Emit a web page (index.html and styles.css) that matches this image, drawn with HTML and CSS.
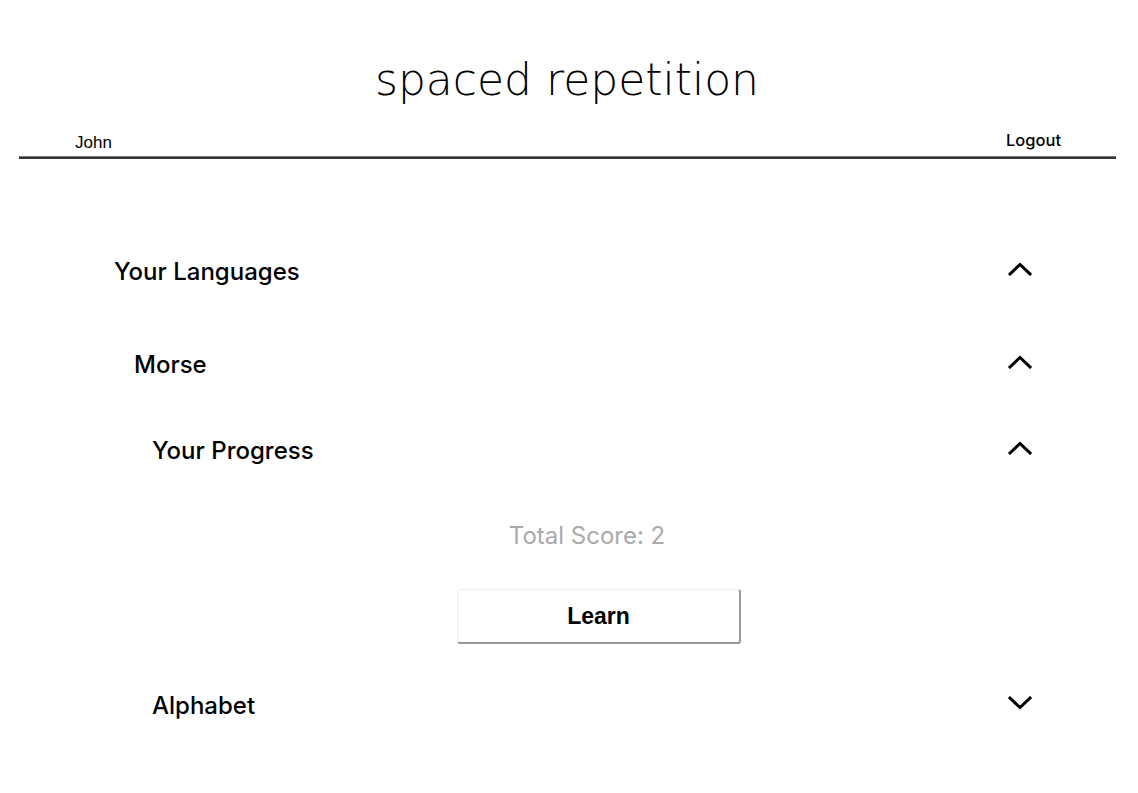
FILE: index.html
```html
<!DOCTYPE html>
<html>
<head>
<meta charset="utf-8">
<link rel="stylesheet" href="styles.css">
</head>
<body>
<header class="site-header">
  <h1 class="title">spaced repetition</h1>
  <nav class="nav">
    <span class="user">John</span>
    <a class="logout" href="#">Logout</a>
  </nav>
  <div class="rule"></div>
</header>
<main class="main">
  <section class="panel level1">
    <div class="row">
      <h2 class="heading">Your Languages</h2>
      <svg class="chev" viewBox="0 0 24 14"><path d="M2 12 L12 2.5 L22 12"/></svg>
    </div>
    <section class="panel level2">
      <div class="row">
        <h2 class="heading">Morse</h2>
        <svg class="chev" viewBox="0 0 24 14"><path d="M2 12 L12 2.5 L22 12"/></svg>
      </div>
      <section class="panel level3">
        <div class="row">
          <h2 class="heading">Your Progress</h2>
          <svg class="chev" viewBox="0 0 24 14"><path d="M2 12 L12 2.5 L22 12"/></svg>
        </div>
        <div class="progress">
          <p class="score">Total Score: 2</p>
          <button class="learn">Learn</button>
        </div>
      </section>
      <section class="panel level3 last">
        <div class="row">
          <h2 class="heading">Alphabet</h2>
          <svg class="chev" viewBox="0 0 24 14"><path d="M2 2 L12 11.5 L22 2"/></svg>
        </div>
      </section>
    </section>
  </section>
</main>
</body>
</html>
```
FILE: styles.css
```css
html, body {
  margin: 0;
  padding: 0;
  background: #fff;
  color: #000;
}
body {
  font-family: "Inter", "Liberation Sans", sans-serif;
  width: 1138px;
}
.site-header {
  padding-top: 48px;
}
.title {
  margin: 0;
  text-align: center;
  font-family: "DejaVu Sans", sans-serif;
  font-weight: 200;
  font-size: 44px;
  line-height: 64px;
  letter-spacing: 0;
  color: #000;
  margin-left: -4px;
}
.nav {
  display: flex;
  justify-content: space-between;
  align-items: flex-end;
  padding: 0 77px 0 75px;
  height: 44px;
}
.user {
  font-family: "Liberation Sans", Arial, sans-serif;
  font-size: 17px;
  line-height: 20px;
  margin-bottom: 3px;
}
.logout {
  font-family: "Inter", sans-serif;
  font-size: 16.5px;
  font-weight: 500;
  line-height: 20px;
  margin-bottom: 6px;
  color: #000;
  text-decoration: none;
}
.rule {
  margin: 0 22px 0 19px;
  height: 3px;
  background: linear-gradient(#777 0, #777 1px, #333 1px, #333 3px);
}
.main {
  padding: 92px 107px 60px 114px;
}
.row {
  display: flex;
  justify-content: space-between;
  align-items: center;
  height: 40px;
}
.heading {
  margin: 0;
  font-size: 24px;
  font-weight: 500;
  letter-spacing: 0;
}
.chev {
  width: 24px;
  height: 14px;
  fill: none;
  stroke: #000;
  stroke-width: 3;
  stroke-linecap: square;
  margin-right: -1px;
  margin-bottom: 5px;
}
.level2 {
  margin-top: 53px;
  margin-left: 20px;
}
.level3 {
  margin-top: 46px;
  margin-left: 18px;
}
.level3.last {
  margin-top: 41px;
}
.progress {
  display: flex;
  flex-direction: column;
  align-items: center;
  margin-top: 51px;
  margin-left: -152px;
  margin-right: -107px;
  padding-left: 36px;
}
.score {
  margin: 0;
  font-size: 24px;
  line-height: 30px;
  color: #aaa;
  font-weight: 400;
}
.learn {
  margin-top: 38px;
  width: 284px;
  height: 55px;
  background: #fff;
  border-style: solid;
  border-width: 1px 2px 2px 1px;
  border-color: #eee #999 #999 #eee;
  border-radius: 3px;
  font-family: "Liberation Sans", Arial, sans-serif;
  font-weight: 700;
  font-size: 23px;
  color: #000;
  padding: 0;
  margin-left: 24px;
}
```
